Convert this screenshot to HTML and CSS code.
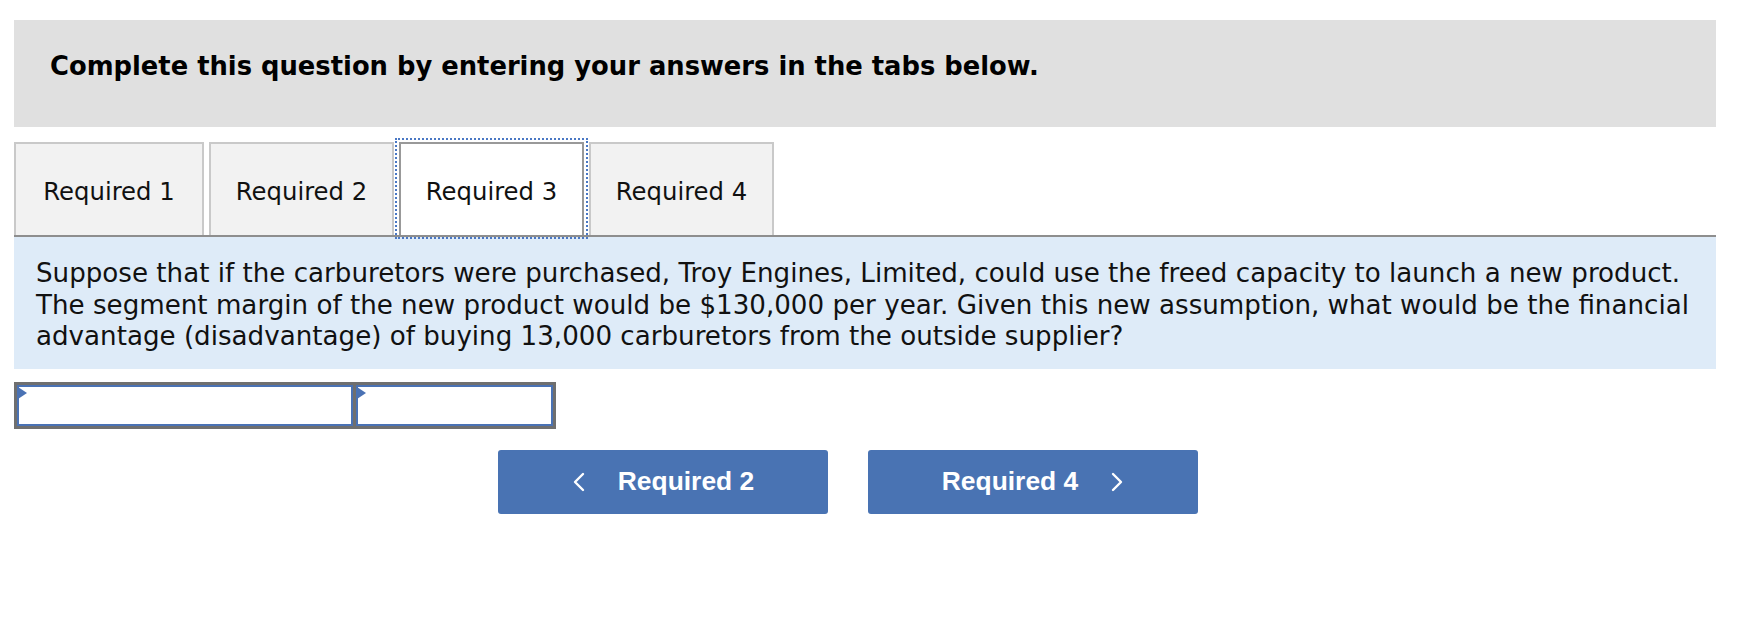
FILE: index.html
```html
<!DOCTYPE html>
<html lang="en">
<head>
<meta charset="utf-8">
<title>Required 3</title>
<link rel="stylesheet" href="styles.css">
</head>
<body>
<div class="page">
  <div class="header">
    <h2 class="header-title">Complete this question by entering your answers in the tabs below.</h2>
  </div>

  <div class="tabs">
    <div class="tab tab-first">Required 1</div>
    <div class="tab">Required 2</div>
    <div class="tab tab-active">Required 3</div>
    <div class="tab">Required 4</div>
  </div>

  <div class="question">
    Suppose that if the carburetors were purchased, Troy Engines, Limited, could use the freed capacity to launch a new product.<br>
    The segment margin of the new product would be $130,000 per year. Given this new assumption, what would be the financial<br>
    advantage (disadvantage) of buying 13,000 carburetors from the outside supplier?
  </div>

  <div class="answer">
    <div class="cell cell-label"></div>
    <div class="cell cell-value"></div>
  </div>

  <div class="nav">
    <button class="nav-btn" type="button">
      <svg class="chev" width="14" height="20" viewBox="0 0 14 20"><path d="M11 2 L3 10 L11 18" fill="none" stroke="#fff" stroke-width="2.4" stroke-linecap="round" stroke-linejoin="round"/></svg>
      <span>Required 2</span>
    </button>
    <button class="nav-btn" type="button">
      <span>Required 4</span>
      <svg class="chev" width="14" height="20" viewBox="0 0 14 20"><path d="M3 2 L11 10 L3 18" fill="none" stroke="#fff" stroke-width="2.4" stroke-linecap="round" stroke-linejoin="round"/></svg>
    </button>
  </div>
</div>
</body>
</html>
```

FILE: styles.css
```css
html, body {
  margin: 0;
  padding: 0;
  background: #fff;
}

.page {
  width: 1702px;
  padding: 20px 0 0 14px;
  font-family: "DejaVu Sans", Verdana, sans-serif;
  color: #111;
}

.header {
  height: 107px;
  background: #e0e0e0;
  box-sizing: border-box;
  padding: 31px 0 0 36px;
}

.header-title {
  margin: 0;
  font-size: 25.8px;
  font-weight: bold;
  color: #000;
  line-height: 30px;
}

.tabs {
  display: flex;
  gap: 5px;
  margin-top: 15px;
  border-bottom: 2px solid #8e8e8e;
  height: 93px;
}

.tab {
  width: 185px;
  box-sizing: border-box;
  height: 93px;
  border: 2px solid #c9c9c9;
  border-bottom: none;
  background: #f2f2f2;
  display: flex;
  align-items: center;
  justify-content: center;
  font-size: 24.3px;
  padding-top: 3px;
}

.tab-first {
  width: 190px;
}

.tab-active {
  background: #fff;
  border-color: #999;
  outline: 2px dotted #4a78c4;
  outline-offset: 2px;
}

.question {
  background: #deebf8;
  padding: 21px 22px 16px 22px;
  font-size: 26.15px;
  line-height: 31.6px;
  color: #111;
  white-space: nowrap;
}

.answer {
  display: flex;
  gap: 3px;
  width: 542px;
  box-sizing: border-box;
  padding: 3px;
  background: #6f6f6f;
  margin-top: 13px;
}

.cell {
  position: relative;
  height: 41px;
  box-sizing: border-box;
  border: 2px solid #4a72b4;
  background: #fff;
}

.cell::before {
  content: "";
  position: absolute;
  left: -1px;
  top: 0;
  width: 0;
  height: 0;
  border-left: 9px solid #4a72b4;
  border-top: 6px solid transparent;
  border-bottom: 6px solid transparent;
}

.cell-label {
  width: 336px;
}

.cell-value {
  width: 197px;
}

.nav {
  display: flex;
  gap: 40px;
  margin: 21px 0 0 484px;
}

.nav-btn {
  width: 330px;
  height: 64px;
  border: none;
  border-radius: 3px;
  background: #4973b3;
  color: #fff;
  font-family: "Liberation Sans", Arial, sans-serif;
  font-weight: bold;
  font-size: 26.4px;
  display: flex;
  align-items: center;
  justify-content: center;
  gap: 32px;
  padding: 0;
}

.chev {
  display: block;
}
```
